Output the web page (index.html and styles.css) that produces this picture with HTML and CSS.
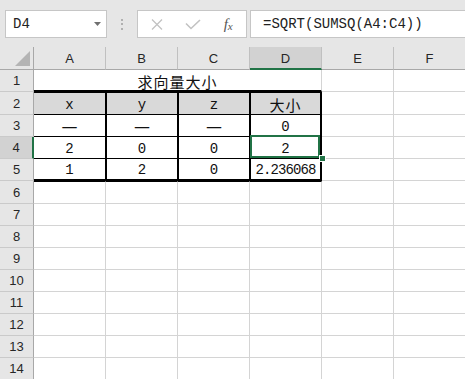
FILE: index.html
```html
<!DOCTYPE html>
<html lang="zh">

<head>
    <meta charset="UTF-8">
    <meta name="viewport" content="width=device-width, initial-scale=1.0">
    <title>求向量大小</title>
    <link rel="stylesheet" href="styles.css">
</head>

<body>
    <div class="toolbar">
        <div class="namebox">
            <span>D4</span>
            <svg width="7" height="4" viewBox="0 0 7 4"><path d="M0 0H7L3.5 4Z" fill="#707070"/></svg>
        </div>
        <div class="grip"><i></i><i></i><i></i></div>
        <div class="fbuttons">
            <span class="fbtn">
                <svg width="12" height="11" viewBox="0 0 12 11"><path d="M1 0.5L11 10.5M11 0.5L1 10.5" stroke="#c2c2c2" stroke-width="1.3" fill="none"/></svg>
            </span>
            <span class="fbtn">
                <svg width="16" height="11" viewBox="0 0 16 11"><path d="M1 4.5L6 9.5L15 1" stroke="#c2c2c2" stroke-width="1.6" fill="none"/></svg>
            </span>
            <span class="fbtn fx">f<small>x</small></span>
        </div>
        <div class="formula">=SQRT(SUMSQ(A4:C4))</div>
    </div>

    <div class="sheet">
        <!-- column headers -->
        <div class="corner"><svg width="15" height="15" viewBox="0 0 15 15"><path d="M15 0V15H0Z" fill="#b4b4b4"/></svg></div>
        <div class="hd">A</div>
        <div class="hd">B</div>
        <div class="hd">C</div>
        <div class="hd sel">D</div>
        <div class="hd">E</div>
        <div class="hd">F</div>

        <div class="rh">1</div>
        <div class="c title">求向量大小</div>
        <div class="c"></div>
        <div class="c"></div>

        <div class="rh">2</div>
        <div class="c tb top">x</div>
        <div class="c tb top mid">y</div>
        <div class="c tb top mid">z</div>
        <div class="c tb top mid last cjk">大小</div>
        <div class="c"></div>
        <div class="c"></div>

        <div class="rh">3</div>
        <div class="c tb dash">—</div>
        <div class="c tb mid dash">—</div>
        <div class="c tb mid dash">—</div>
        <div class="c tb mid last">0</div>
        <div class="c"></div>
        <div class="c"></div>

        <div class="rh sel">4</div>
        <div class="c tb">2</div>
        <div class="c tb mid">0</div>
        <div class="c tb mid">0</div>
        <div class="c tb mid last active">2<span class="handle"></span></div>
        <div class="c"></div>
        <div class="c"></div>

        <div class="rh">5</div>
        <div class="c tb bot">1</div>
        <div class="c tb bot mid">2</div>
        <div class="c tb bot mid">0</div>
        <div class="c tb bot mid last long">2.236068</div>
        <div class="c"></div>
        <div class="c"></div>

        <div class="rh">6</div>
        <div class="c under"></div>
        <div class="c under"></div>
        <div class="c under"></div>
        <div class="c under"></div>
        <div class="c"></div>
        <div class="c"></div>

        <div class="rh">7</div>
        <div class="c"></div><div class="c"></div><div class="c"></div><div class="c"></div><div class="c"></div><div class="c"></div>
        <div class="rh">8</div>
        <div class="c"></div><div class="c"></div><div class="c"></div><div class="c"></div><div class="c"></div><div class="c"></div>
        <div class="rh">9</div>
        <div class="c"></div><div class="c"></div><div class="c"></div><div class="c"></div><div class="c"></div><div class="c"></div>
        <div class="rh">10</div>
        <div class="c"></div><div class="c"></div><div class="c"></div><div class="c"></div><div class="c"></div><div class="c"></div>
        <div class="rh">11</div>
        <div class="c"></div><div class="c"></div><div class="c"></div><div class="c"></div><div class="c"></div><div class="c"></div>
        <div class="rh">12</div>
        <div class="c"></div><div class="c"></div><div class="c"></div><div class="c"></div><div class="c"></div><div class="c"></div>
        <div class="rh">13</div>
        <div class="c"></div><div class="c"></div><div class="c"></div><div class="c"></div><div class="c"></div><div class="c"></div>
        <div class="rh">14</div>
        <div class="c"></div><div class="c"></div><div class="c"></div><div class="c"></div><div class="c"></div><div class="c"></div>
    </div>
</body>

</html>
```

FILE: styles.css
```css
* {
    margin: 0;
    padding: 0;
    box-sizing: border-box;
}

body {
    background: #fff;
    overflow: hidden;
    font-family: 'Liberation Mono', 'Noto Sans CJK SC', monospace;
}

/* formula bar */

.toolbar {
    display: flex;
    height: 47px;
    padding: 10px 0 9px 5px;
    background: #e6e6e6;
}

.namebox {
    display: flex;
    align-items: center;
    justify-content: space-between;
    width: 102px;
    padding: 0 5px 0 7px;
    background: #fff;
    border: 1px solid #c6c6c6;
    font-size: 14px;
    color: #222;
}

.grip {
    display: flex;
    flex-direction: column;
    align-items: center;
    justify-content: center;
    gap: 2.5px;
    width: 30px;
}

.grip i {
    width: 2px;
    height: 2px;
    background: #b0b0b0;
}

.fbuttons {
    display: flex;
    width: 110px;
    padding-left: 1px;
    background: #fff;
    border: 1px solid #c6c6c6;
}

.fbtn {
    display: flex;
    align-items: center;
    justify-content: center;
    width: 36px;
}

.fx {
    font-family: 'Liberation Serif', serif;
    font-style: italic;
    font-size: 15px;
    color: #555;
}

.fx small {
    font-size: 11px;
    margin-top: 3px;
}

.formula {
    flex: 1;
    display: flex;
    align-items: center;
    margin-left: 3px;
    padding-left: 12px;
    background: #fff;
    border: 1px solid #c6c6c6;
    border-right: none;
    font-size: 14px;
    color: #222;
}

/* sheet grid */

.sheet {
    display: grid;
    grid-template-columns: 34px repeat(6, 72px);
    grid-template-rows: 23px 22px 23px 22px 22px 22px 23px repeat(8, 22px);
    font-size: 14px;
    color: #111;
}

.sheet > div {
    display: flex;
    align-items: center;
    justify-content: center;
}

.corner {
    background: #e6e6e6;
    border-right: 1px solid #a8a8a8;
    border-bottom: 1px solid #a8a8a8;
    padding: 0 3px 3px 0;
}

.sheet > .corner {
    align-items: flex-end;
    justify-content: flex-end;
}

.hd,
.rh {
    background: #e6e6e6;
    font-family: 'Liberation Sans', sans-serif;
    font-size: 13px;
    color: #262626;
}

.hd {
    border-right: 1px solid #c0c0c0;
    border-bottom: 1px solid #a8a8a8;
    padding-top: 1px;
}

.rh {
    border-right: 1px solid #a8a8a8;
    border-bottom: 1px solid #cacaca;
}

.hd.sel {
    background: #d2d2d2;
    border-bottom: 2px solid #217346;
}

.rh.sel {
    background: #d2d2d2;
    border-right: 2px solid #217346;
}

.c {
    border-right: 1px solid #d4d4d4;
    border-bottom: 1px solid #d4d4d4;
}

.title {
    grid-column: span 4;
    border-bottom: 2px solid #000;
    font-family: 'Noto Sans CJK SC', sans-serif;
    font-size: 15px;
    letter-spacing: 1px;
    line-height: 16px;
    padding-top: 3px;
}

.cjk {
    font-family: 'Noto Sans CJK SC', sans-serif;
    font-size: 15px;
    letter-spacing: 1px;
    line-height: 16px;
}

.dash {
    font-family: 'DejaVu Sans', sans-serif;
    font-size: 16px;
    line-height: 16px;
}

.tb {
    border-right-color: #000;
    border-bottom-color: #000;
    padding-top: 2px;
}

.tb.mid {
    border-left: 1px solid #000;
}

.tb.last {
    border-right: 2px solid #000;
}

.tb.top {
    border-top: 1px solid #000;
    background: #d9d9d9;
}

.tb.bot {
    border-bottom: 2px solid #000;
}

.long {
    letter-spacing: -0.9px;
}

.under {
    border-top: 1px solid #000;
}

/* active cell */

.active {
    position: relative;
}

.active::before {
    content: '';
    position: absolute;
    top: -2px;
    left: -1px;
    right: 0;
    bottom: 0;
    border: 2px solid #217346;
}

.handle {
    position: absolute;
    left: 68px;
    top: 18px;
    width: 7px;
    height: 7px;
    background: #217346;
    border: 1px solid #fff;
}
```
